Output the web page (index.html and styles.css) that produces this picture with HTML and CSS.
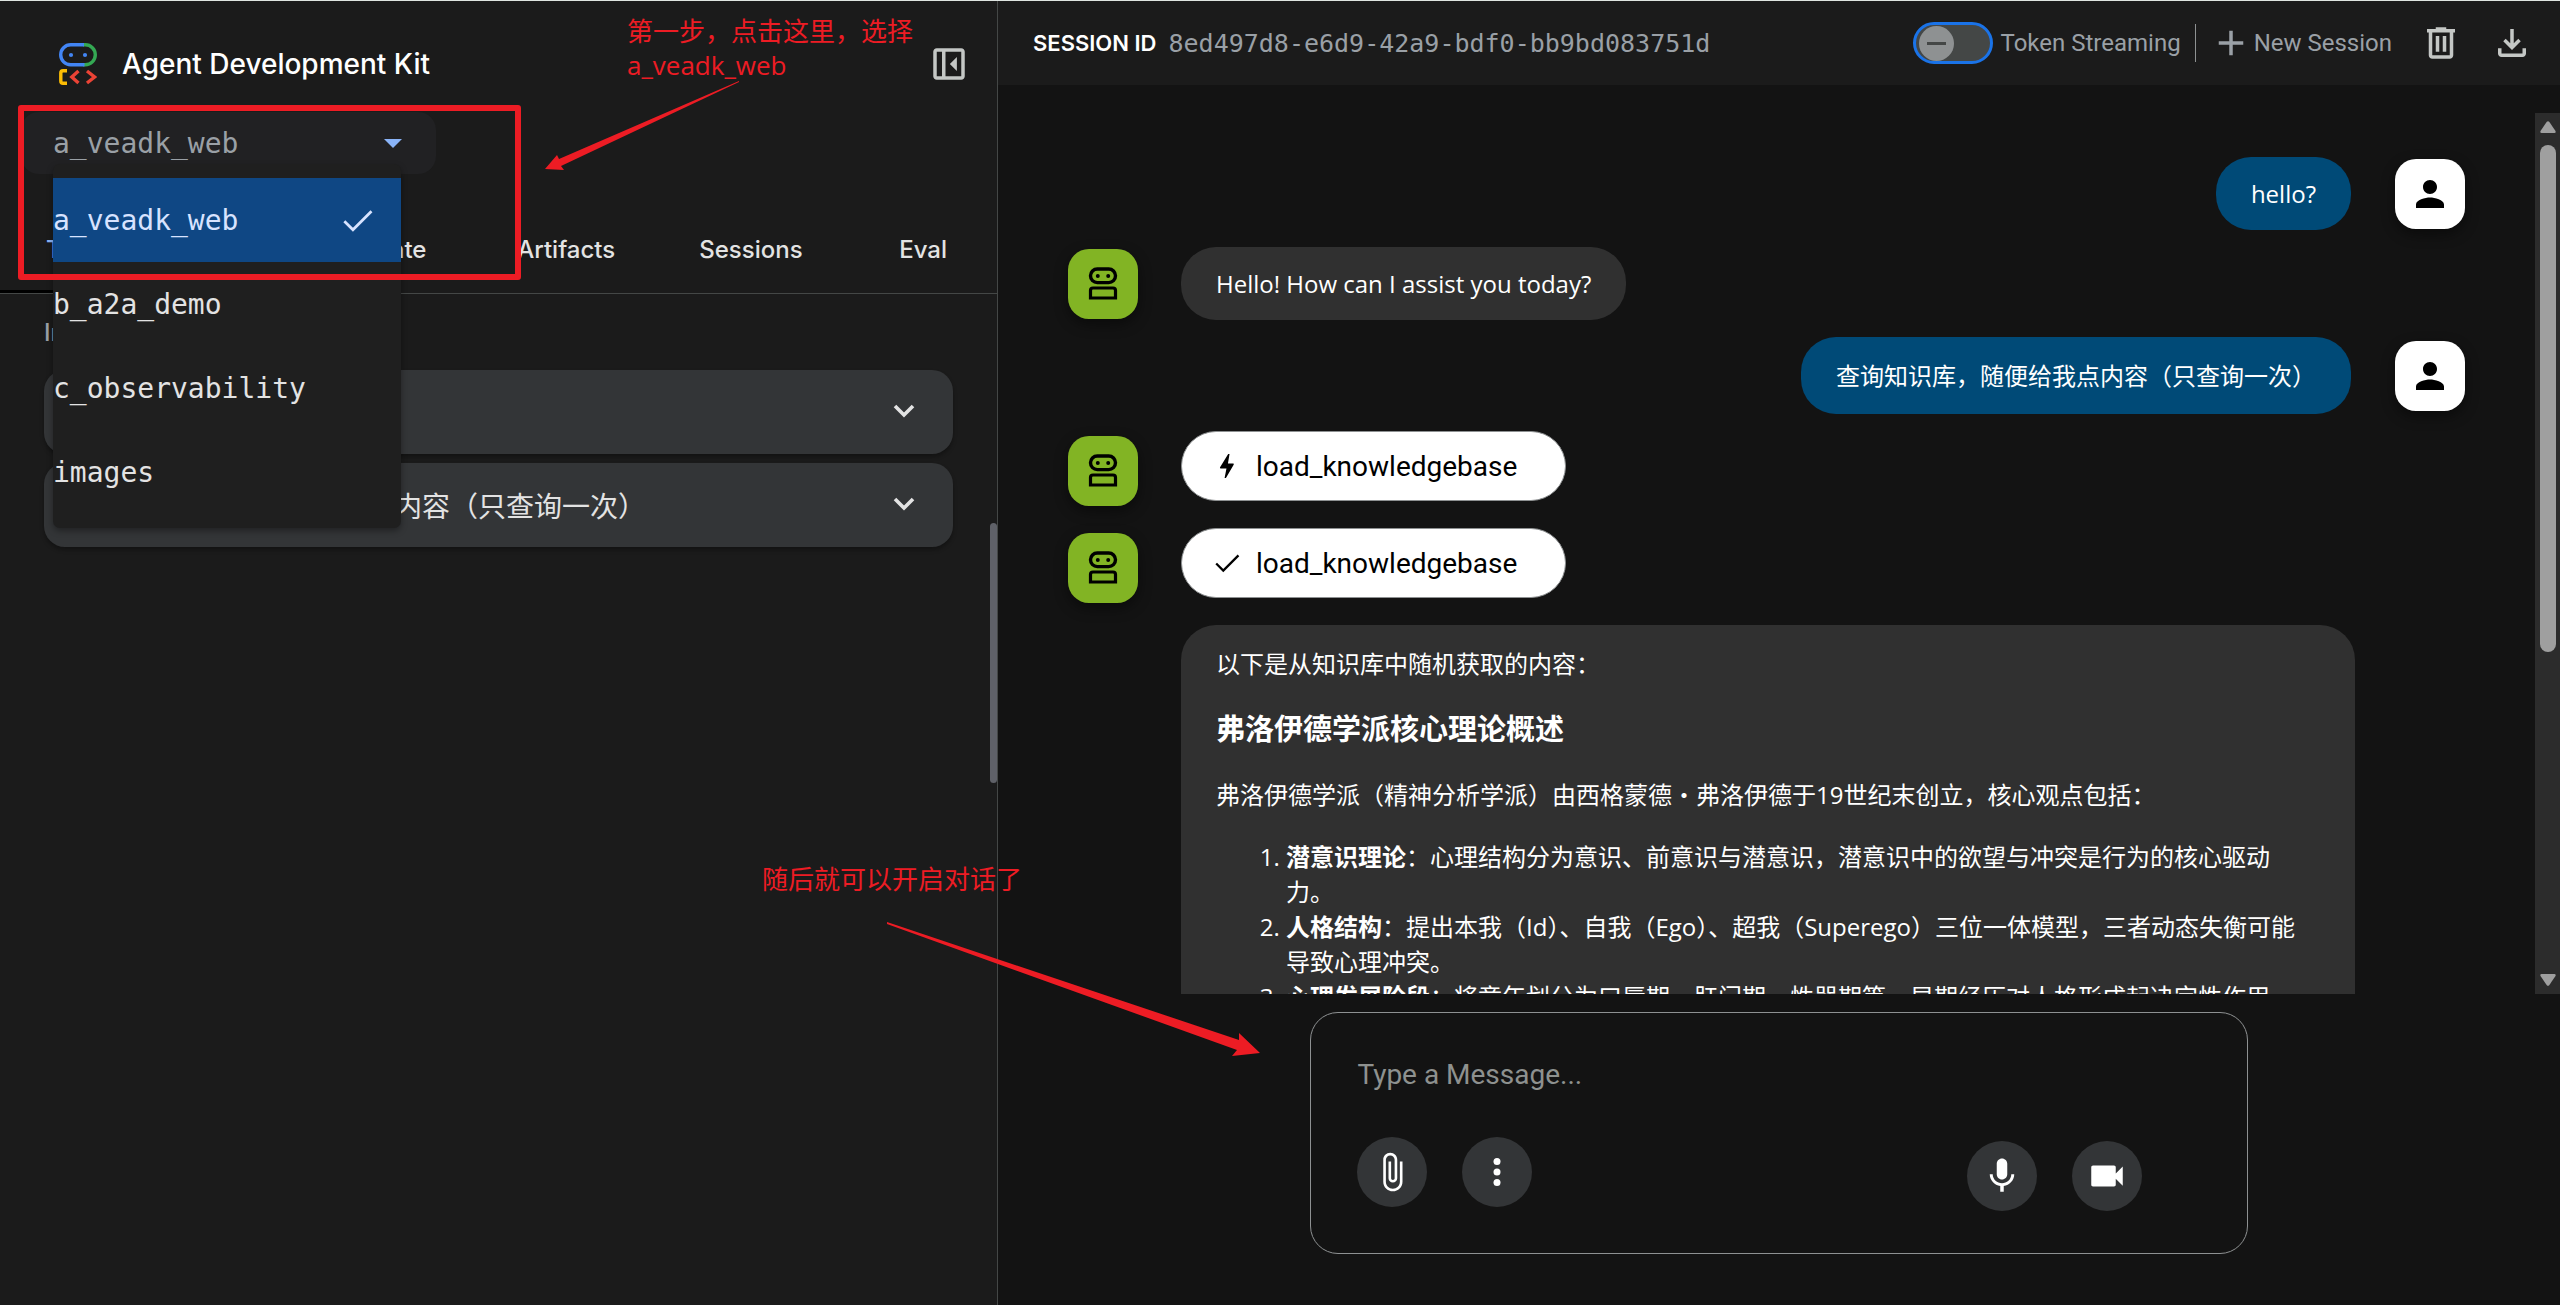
FILE: index.html
```html
<!DOCTYPE html>
<html lang="zh-CN">
<head>
<meta charset="utf-8">
<meta name="viewport" content="width=device-width, initial-scale=1">
<title>Agent Development Kit</title>
<link rel="stylesheet" href="styles.css">
</head>
<body>
<svg class="sprite" aria-hidden="true">
  <symbol id="i-robot" viewBox="0 0 30 34">
    <rect x="2.5" y="2" width="25" height="13.6" rx="6.8" fill="none" stroke="currentColor" stroke-width="3.4"/>
    <circle cx="9.8" cy="9" r="2" fill="currentColor"/><circle cx="20.2" cy="9" r="2" fill="currentColor"/>
    <path d="M2.5 31V23.5q0-2.5 2.5-2.5h20q2.500 0 2.500 2.500V31z" fill="none" stroke="currentColor" stroke-width="3.2"/>
  </symbol>
  <symbol id="i-person" viewBox="0 0 24 24"><path fill="currentColor" d="M12 12c2.21 0 4-1.79 4-4s-1.79-4-4-4-4 1.790-4 4 1.790 4 4 4zm0 2c-2.670 0-8 1.340-8 4v2h16v-2c0-2.660-5.330-4-8-4z"/></symbol>
  <symbol id="i-check" viewBox="0 0 24 24"><path fill="none" stroke="currentColor" stroke-width="1.700" d="M3.900 12.400 9.200 17.700 20.600 6.300"/></symbol>
  <symbol id="i-chevron" viewBox="0 0 24 24"><path fill="none" stroke="currentColor" stroke-width="3.600" d="M3 6 12 15 21 6"/></symbol>
</svg>

<div class="app">
  <aside class="side">
    <header class="side-head">
      <svg class="logo" viewBox="0 0 38 42" aria-hidden="true">
        <g fill="none" stroke-width="3.4">
          <path stroke="#34a853" d="M24 1.800h2.300a10 10 0 0 1 0 20H24"/>
          <path stroke="#4285f4" d="M25 1.800H11.700a10 10 0 0 0 0 20H25.500"/>
          <path stroke="#fbbc04" d="M8 27.700H4q-2.200 0-2.200 2.200v8.200q0 2.200 2.200 2.200h4"/>
          <path stroke="#ea4335" d="M19.500 28 12.800 34l6.700 6M28 28l7.500 6-7.500 6"/>
        </g>
        <circle cx="12" cy="12" r="2.100" fill="#4285f4"/><circle cx="26" cy="12" r="2.100" fill="#4285f4"/>
      </svg>
      <h1 class="brand">Agent Development Kit</h1>
      <button class="icon-btn" aria-label="Close panel"><svg viewBox="0 -960 960 960"><path fill="currentColor" d="M660-320v-320L500-480l160 160ZM200-120q-33 0-56.500-23.500T120-200v-560q0-33 23.500-56.500T200-840h560q33 0 56.500 23.500T840-760v560q0 33-23.500 56.500T760-120H200Zm120-80v-560H200v560h120Zm80 0h360v-560H400v560Z"/></svg></button>
    </header>

    <div class="app-picker">
      <select class="app-select" aria-label="Select an app">
        <option>a_veadk_web</option><option>b_a2a_demo</option><option>c_observability</option><option>images</option>
      </select>
      <svg class="caret" viewBox="0 0 18 9" aria-hidden="true"><path fill="#8ab4f8" d="M0 0h18L9 9z"/></svg>
      <ul class="menu" role="listbox" aria-label="Apps">
        <li class="option selected" role="option" aria-selected="true">a_veadk_web<svg class="tick" aria-hidden="true"><use href="#i-check"/></svg></li>
        <li class="option" role="option">b_a2a_demo</li>
        <li class="option" role="option">c_observability</li>
        <li class="option" role="option">images</li>
      </ul>
    </div>

    <nav class="tabs" role="tablist">
      <button class="tab active" role="tab" aria-selected="true">Trace</button>
      <button class="tab" role="tab">Events</button>
      <button class="tab" role="tab">State</button>
      <button class="tab" role="tab">Artifacts</button>
      <button class="tab" role="tab">Sessions</button>
      <button class="tab" role="tab">Eval</button>
    </nav>

    <section class="trace">
      <h2 class="trace-title">Invocations</h2>
      <button class="trace-row"><span>hello?</span><svg class="chevron" aria-hidden="true"><use href="#i-chevron"/></svg></button>
      <button class="trace-row"><span>查询知识库，随便给我点内容（只查询一次）</span><svg class="chevron" aria-hidden="true"><use href="#i-chevron"/></svg></button>
    </section>
    <div class="resizer"></div>
  </aside>

  <main class="main">
    <header class="toolbar">
      <span class="session-label">SESSION ID</span>
      <span class="session-id">8ed497d8-e6d9-42a9-bdf0-bb9bd083751d</span>
      <label class="streaming">
        <input type="checkbox" role="switch" class="switch">
        <span>Token Streaming</span>
      </label>
      <span class="divider"></span>
      <button class="new-session"><svg viewBox="0 -960 960 960" aria-hidden="true"><path fill="currentColor" d="M440-440H200v-80h240v-240h80v240h240v80H520v240h-80v-240Z"/></svg>New Session</button>
      <button class="icon-btn" aria-label="Delete session"><svg viewBox="0 -960 960 960"><path fill="currentColor" d="M280-120q-33 0-56.500-23.500T200-200v-520h-40v-80h200v-40h240v40h200v80h-40v520q0 33-23.500 56.500T680-120H280Zm400-600H280v520h400v-520ZM360-280h80v-360h-80v360Zm160 0h80v-360h-80v360Z"/></svg></button>
      <button class="icon-btn" aria-label="Export session"><svg viewBox="0 -960 960 960"><path fill="currentColor" d="M480-320 280-520l56-58 104 104v-326h80v326l104-104 56 58-200 200ZM240-160q-33 0-56.500-23.500T160-240v-120h80v120h480v-120h80v120q0 33-23.500 56.500T720-160H240Z"/></svg></button>
    </header>

    <div class="chat">
      <div class="messages">
        <div class="row user"><div class="bubble">hello?</div><span class="avatar person"><svg><use href="#i-person"/></svg></span></div>
        <div class="row"><span class="avatar bot"><svg><use href="#i-robot"/></svg></span><div class="bubble">Hello! How can I assist you today?</div></div>
        <div class="row user"><div class="bubble tall">查询知识库，随便给我点内容（只查询一次）</div><span class="avatar person"><svg><use href="#i-person"/></svg></span></div>
        <div class="row"><span class="avatar bot"><svg><use href="#i-robot"/></svg></span><button class="call"><svg viewBox="0 0 24 24" aria-hidden="true"><path fill="currentColor" d="M11.200 21h-1l1.400-7.200H7.200q-.8 0-.4-.8L12.900 3h1l-1.200 7.200h3.900q.8 0 .4.800z"/></svg>load_knowledgebase</button></div>
        <div class="row"><span class="avatar bot"><svg><use href="#i-robot"/></svg></span><button class="call"><svg aria-hidden="true"><use href="#i-check"/></svg>load_knowledgebase</button></div>
        <div class="row reply">
          <div class="bubble answer">
            <p>以下是从知识库中随机获取的内容：</p>
            <h3>弗洛伊德学派核心理论概述</h3>
            <p>弗洛伊德学派（精神分析学派）由西格蒙德・弗洛伊德于19世纪末创立，核心观点包括：</p>
            <ol>
              <li><strong>潜意识理论</strong>：心理结构分为意识、前意识与潜意识，潜意识中的欲望与冲突是行为的核心驱动力。</li>
              <li><strong>人格结构</strong>：提出本我（Id）、自我（Ego）、超我（Superego）三位一体模型，三者动态失衡可能导致心理冲突。</li>
              <li><strong>心理发展阶段</strong>：将童年划分为口唇期、肛门期、性器期等，早期经历对人格形成起决定性作用。</li>
            </ol>
          </div>
        </div>
      </div>
      <div class="scrollbar" aria-hidden="true">
        <svg viewBox="0 0 16 12"><path fill="#9f9f9f" d="M6.800.8q1.200-1.200 2.400 0L15.500 10q.6 2-1 2h-13q-1.600 0-1-2z"/></svg>
        <div class="track"><div class="thumb"></div></div>
        <svg viewBox="0 0 16 12"><path fill="#9f9f9f" d="M6.800 11.200q1.200 1.200 2.400 0L15.500 2q.6-2-1-2h-13Q-.1 0 .5 2z"/></svg>
      </div>
    </div>

    <form class="composer">
      <textarea class="message" rows="1" placeholder="Type a Message..." aria-label="Message"></textarea>
      <div class="actions">
        <button type="button" class="round" aria-label="Attach file"><svg viewBox="0 0 24 24"><path fill="currentColor" d="M16.500 6v11.500c0 2.210-1.790 4-4 4s-4-1.790-4-4V5c0-1.380 1.120-2.500 2.500-2.500s2.500 1.120 2.500 2.500v10.500c0 .55-.45 1-1 1s-1-.45-1-1V6H10v9.500c0 1.380 1.120 2.500 2.500 2.500s2.500-1.120 2.500-2.500V5c0-2.210-1.790-4-4-4S7 2.790 7 5v12.500c0 3.040 2.460 5.500 5.500 5.500s5.500-2.460 5.500-5.500V6h-1.500z"/></svg></button>
        <button type="button" class="round" aria-label="More options"><svg viewBox="0 0 24 24" fill="currentColor"><circle cx="12" cy="6" r="2"/><circle cx="12" cy="12" r="2"/><circle cx="12" cy="18" r="2"/></svg></button>
        <div class="media">
          <button type="button" class="round" aria-label="Use microphone"><svg viewBox="0 0 24 24"><path fill="currentColor" d="M12 14c1.660 0 3-1.340 3-3V5c0-1.660-1.340-3-3-3S9 3.340 9 5v6c0 1.660 1.340 3 3 3zm5.300-3c0 3-2.540 5.100-5.300 5.100S6.700 14 6.700 11H5c0 3.410 2.720 6.230 6 6.720V21h2v-3.280c3.280-.48 6-3.300 6-6.720h-1.700z"/></svg></button>
          <button type="button" class="round" aria-label="Use camera"><svg viewBox="0 0 24 24"><path fill="currentColor" d="M17 10.500V7c0-.55-.45-1-1-1H4c-.55 0-1 .45-1 1v10c0 .55.45 1 1 1h12c.55 0 1-.45 1-1v-3.500l4 4v-11l-4 4z"/></svg></button>
        </div>
      </div>
    </form>
  </main>
</div>

<div class="notes">
  <div class="note-box"></div>
  <p class="note note-first">第一步，点击这里，选择<br>a_veadk_web</p>
  <p class="note note-second">随后就可以开启对话了</p>
  <svg class="arrow arrow-first" viewBox="0 0 196 92" aria-hidden="true"><path d="M194 2 14 80 12 76 0 90l19 1-3-4L194 3z"/></svg>
  <svg class="arrow arrow-second" viewBox="0 0 376 138" aria-hidden="true"><path d="M1 2 353 120V113l21 20-28 3 5-6L1 4z"/></svg>
</div>
</body>
</html>
```
FILE: styles.css
```css
* { box-sizing: border-box; }

body {
  margin: 0;
  border-top: 1px solid #dfe5e1;
  background: #131313;
  color: #e3e3e3;
  font-family: Roboto, "Noto Sans CJK SC", sans-serif;
  font-size: 24px;
  position: relative;
}

button {
  border: 0;
  padding: 0;
  background: none;
  color: inherit;
  font: inherit;
}

svg { display: block; flex: none; }
h1, h2, h3, p, ol, ul { margin: 0; padding: 0; }
.sprite { position: absolute; width: 0; height: 0; }

.app {
  display: grid;
  grid-template-columns: 499fr 781fr;
  height: calc(100vh - 1px);
}

/* Side panel */
.side {
  position: relative;
  min-width: 0;
  border-right: 1px solid #444746;
  background: #1b1b1b;
}

.side-head {
  display: flex;
  align-items: center;
  padding: 42px 27px 27px 59px;
}

.logo { width: 38px; height: 42px; }

.brand {
  flex: 1;
  margin-left: 25px;
  color: #fff;
  font: 500 28px/42px Inter, sans-serif;
}

.icon-btn { color: #c4c7c5; }
.icon-btn svg { width: 42px; height: 42px; }

.app-picker {
  position: relative;
  width: 415px;
  margin-left: 21px;
}

.app-select {
  display: block;
  appearance: none;
  width: 100%;
  height: 62px;
  padding: 0 32px;
  border: 0;
  border-radius: 18px;
  background: #212123;
  color: #9aa0a6;
  font: 28px "DejaVu Sans Mono", monospace;
}

.caret {
  position: absolute;
  top: 27px;
  right: 34px;
  width: 18px;
  height: 9px;
}

.menu {
  position: absolute;
  z-index: 2;
  top: 52px;
  left: 32px;
  width: 348px;
  padding: 14px 0;
  border-radius: 7px;
  background: #1f1f1f;
  box-shadow: 0 3px 6px rgba(0, 0, 0, .35);
  list-style: none;
}

.option {
  display: flex;
  align-items: center;
  justify-content: space-between;
  height: 84px;
  padding-right: 24px;
  font: 28px "DejaVu Sans Mono", monospace;
}

.option.selected { background: #0f4784; color: #d7e3ff; }
.tick { width: 39px; height: 39px; }

.tabs {
  display: flex;
  margin-top: 35px;
  border-bottom: 1px solid #444746;
  overflow: hidden;
}

.tab {
  flex: none;
  min-width: 157px;
  height: 84px;
  padding: 0 42px;
  border-bottom: 3px solid transparent;
  color: #e3e3e3;
  font: 500 24px Inter, sans-serif;
}

.tab.active { border-color: #000; color: #8ab4f8; }

.trace {
  display: flex;
  flex-direction: column;
  gap: 9px;
  padding: 21px 44px;
}

.trace-title {
  margin-bottom: 11px;
  color: #9aa0a6;
  font: 500 24px/35px Inter, sans-serif;
}

.trace-row {
  display: flex;
  align-items: center;
  justify-content: space-between;
  height: 84px;
  padding: 0 37px 0 42px;
  border-radius: 21px;
  background: #333537;
  box-shadow: 0 3px 4px rgba(0, 0, 0, .3);
  font-size: 28px;
}

.chevron { width: 24px; height: 24px; }

.resizer {
  position: absolute;
  top: 40%;
  right: 0;
  width: 7px;
  height: 20%;
  border-radius: 4px;
  background: #5f6168;
}

/* Main column */
.main {
  display: flex;
  flex-direction: column;
  min-width: 0;
  min-height: 0;
}

.toolbar {
  display: flex;
  align-items: center;
  height: 84px;
  padding: 0 27px 0 35px;
  background: #1b1b1b;
  color: #9aa0a6;
}

.session-label {
  color: #fff;
  font: 600 22px Inter, sans-serif;
}

.session-id {
  flex: 1;
  margin-left: 12px;
  font: 25px "DejaVu Sans Mono", monospace;
}

.streaming { display: flex; align-items: center; gap: 8px; }

.switch {
  appearance: none;
  display: grid;
  align-items: center;
  width: 80px;
  height: 42px;
  margin: 0;
  padding: 0 3px;
  border: 3px solid #1a73e8;
  border-radius: 21px;
  background: #444746;
}

.switch::before {
  content: "";
  width: 35px;
  height: 35px;
  border-radius: 50%;
  background: linear-gradient(#444746, #444746) center / 19px 3px no-repeat #8e9192;
}

.divider {
  width: 1px;
  height: 38px;
  margin: 0 14px;
  background: #8e9192;
}

.new-session { display: flex; align-items: center; gap: 2px; margin-right: 28px; }
.new-session svg { width: 42px; height: 42px; }
.toolbar .icon-btn + .icon-btn { margin-left: 29px; }

.chat {
  display: flex;
  flex: 1;
  min-height: 0;
  margin-top: 28px;
}

.messages {
  display: flex;
  flex: 1;
  flex-direction: column;
  gap: 17px;
  min-width: 0;
  padding: 44px 70px 0;
  overflow: hidden;
}

.row { display: flex; flex: none; align-items: center; gap: 43px; }
.row.user { justify-content: flex-end; gap: 44px; }
.row.reply { padding: 0 110px 0 113px; }

.avatar {
  display: grid;
  flex: none;
  place-items: center;
  width: 70px;
  height: 70px;
  border-radius: 21px;
  color: #000;
  box-shadow: 0 5px 14px rgba(0, 0, 0, .45);
}

.avatar.bot { background: #82b424; }
.avatar.bot svg { width: 30px; height: 34px; }
.avatar.person { background: #fff; }
.avatar.person svg { width: 42px; height: 42px; }

.bubble {
  padding: 19px 35px;
  border-radius: 35px;
  background: #303030;
  color: #fff;
  font-family: "Open Sans", "Noto Sans CJK SC", sans-serif;
  line-height: 35px;
}

.row.user .bubble { background: #004a77; }
.bubble.tall { padding: 21px 35px; }
.answer { flex: 1; padding: 21px 35px; }
.answer p { margin-bottom: 27px; }

.answer h3 {
  margin-bottom: 27px;
  font-size: 29px;
  line-height: 42px;
}

.answer ol { padding-left: 70px; padding-right: 16px; }

.call {
  display: flex;
  align-items: center;
  gap: 13px;
  height: 70px;
  margin-bottom: 10px;
  padding: 0 48px 0 29px;
  border: 1px solid #8e9192;
  border-radius: 35px;
  background: #fff;
  color: #000;
  font-size: 28px;
}

.call svg { width: 32px; height: 32px; }

.scrollbar {
  display: flex;
  flex-direction: column;
  align-items: center;
  width: 25px;
  padding: 8px 0;
  background: #2c2c2c;
}

.scrollbar svg { width: 16px; height: 12px; }
.track { flex: 1; width: 16px; margin: 12px 0; }
.thumb { height: 62%; border-radius: 8px; background: #9f9f9f; }

.composer {
  width: 60%;
  margin: 18px auto 51px;
  padding: 42px 105px 42px 46px;
  border: 1px solid #8e9192;
  border-radius: 28px;
}

.message {
  display: block;
  width: 100%;
  height: 40px;
  padding: 0;
  border: 0;
  resize: none;
  background: none;
  color: #e3e3e3;
  font: 28px/40px Roboto, "Noto Sans CJK SC", sans-serif;
}

.message::placeholder { color: #8e918f; }

.actions { display: flex; gap: 35px; margin-top: 42px; }
.media { display: flex; gap: 35px; margin-left: auto; padding-top: 4px; }

.round {
  display: grid;
  place-items: center;
  width: 70px;
  height: 70px;
  border-radius: 50%;
  background: #333537;
  color: #fff;
}

.round svg { width: 42px; height: 42px; }

/* Red walkthrough marks drawn over the interface */
.notes { position: absolute; z-index: 5; top: -1px; left: 0; pointer-events: none; }

.note-box {
  position: absolute;
  top: 105px;
  left: 18px;
  width: 503px;
  height: 175px;
  border: 6px solid #ed1c24;
  border-radius: 3px;
}

.note {
  position: absolute;
  color: #ed1c24;
  font: 26px/34px "Open Sans", "Noto Sans CJK SC", sans-serif;
  white-space: nowrap;
}

.note-first { top: 14px; left: 627px; }
.note-second { top: 862px; left: 762px; }

.arrow { position: absolute; fill: #ed1c24; }
.arrow-first { top: 79px; left: 545px; width: 196px; height: 92px; }
.arrow-second { top: 920px; left: 886px; width: 376px; height: 138px; }
```
